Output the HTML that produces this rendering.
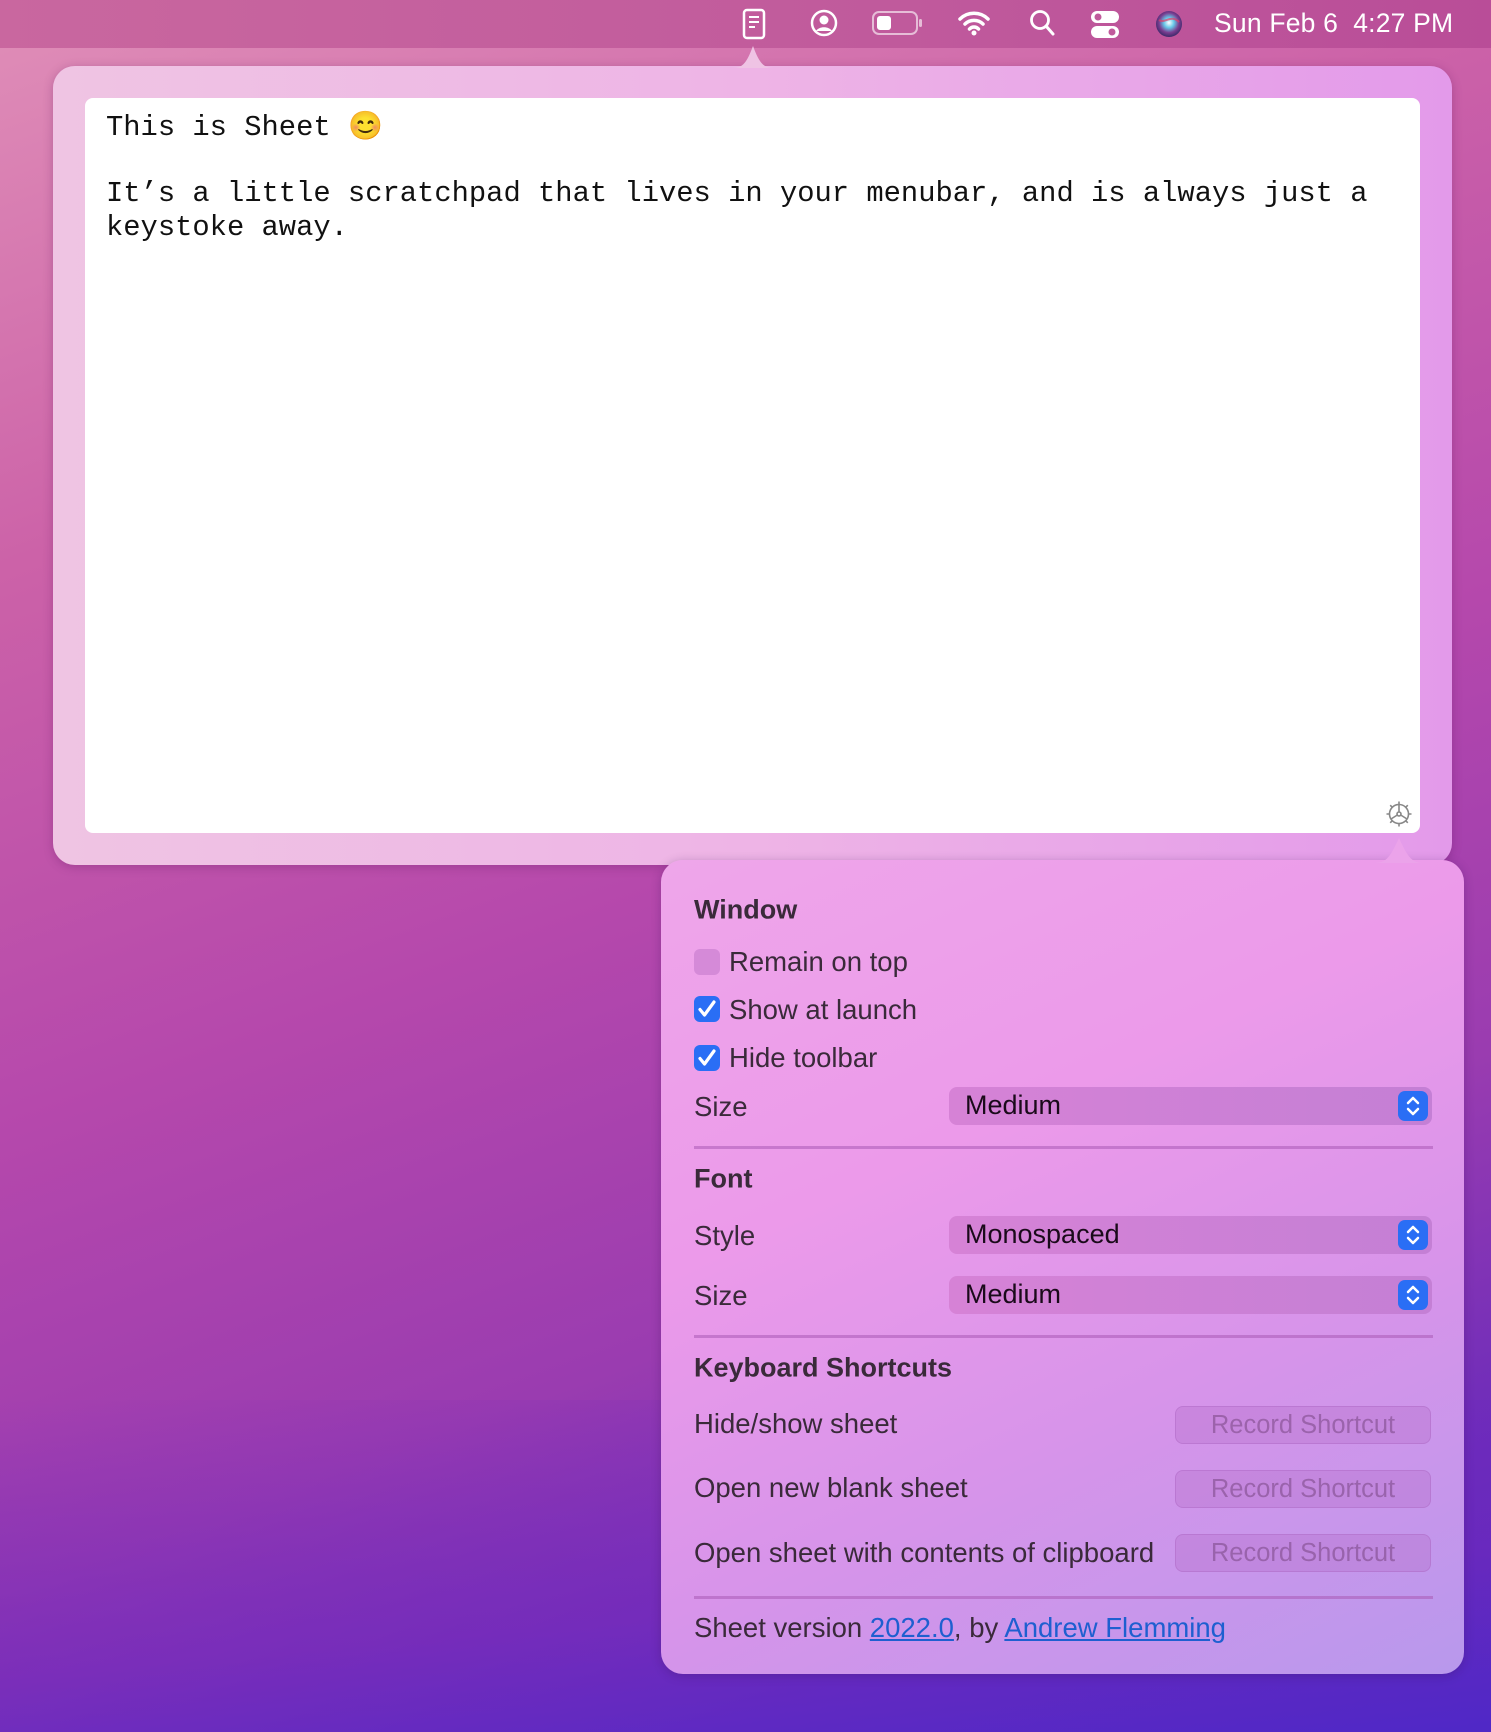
<!DOCTYPE html>
<html><head><meta charset="utf-8"><style>
*{margin:0;padding:0;box-sizing:border-box}
body{width:1491px;height:1732px;overflow:hidden;position:relative;font-family:"Liberation Sans",sans-serif;
background:linear-gradient(160deg,#e08fb8 0%,#cc62a8 25%,#b548ac 50%,#9a3cb0 70%,#6a2bbb 88%,#4d2ac0 100%)}
.bg1{position:absolute;left:0;top:1400px;width:1491px;height:332px;background:linear-gradient(175deg,rgba(130,40,180,0) 0%,rgba(110,40,190,.6) 60%,rgba(80,40,200,.8) 100%)}
.bar{position:absolute;left:0;top:0;width:1491px;height:48px;background:linear-gradient(90deg,#c9679f,#c05a9c 60%,#b94d98)}
.clock{position:absolute;left:1214px;top:8px;color:#fff;font-size:26.5px;letter-spacing:.2px}
.ic{position:absolute;top:8px}
.pop{position:absolute;left:53px;top:66px;width:1399px;height:799px;border-radius:22px;
background:linear-gradient(90deg,#efc4e3 0%,#eeb4e6 50%,#e39aea 100%);box-shadow:0 2px 10px rgba(90,20,90,.3)}
.arrow1{position:absolute;left:733px;top:44px;width:40px;height:24px}
.paper{position:absolute;left:85px;top:98px;width:1335px;height:735px;background:#fff;border-radius:8px}
.mono{position:absolute;left:106px;font-family:"Liberation Mono",monospace;font-size:28.8px;color:#111;white-space:pre;line-height:34px}
.set{position:absolute;left:661px;top:860px;width:803px;height:814px;border-radius:22px;
background:linear-gradient(155deg,#eea6ea 0%,#ec9aea 35%,#d794ea 65%,#b898ec 100%);box-shadow:0 2px 10px rgba(60,20,90,.3)}
.t{position:absolute;left:694px;font-size:27.5px;color:#3a2a3a;transform:translateY(-50%);white-space:nowrap}
.h{font-weight:bold;font-size:27px}
.cb{position:absolute;left:694px;width:26px;height:26px;border-radius:6px;transform:translateY(-50%)}
.on{background:#2a6ef5}
.off{background:#d58ad8}
.pu{position:absolute;left:949px;width:483px;height:38px;border-radius:8px;background:linear-gradient(90deg,#d682d6,#c47fd5);font-size:27px;color:#1a0a1a;padding:3px 16px}
.pu .st{position:absolute;right:4px;top:4px;width:30px;height:30px;border-radius:7px;background:#2a6ef5}
.dv{position:absolute;left:694px;width:739px;height:3px;background:rgba(170,90,180,.55)}
.btn{position:absolute;left:1175px;width:256px;height:38px;border-radius:8px;background:rgba(180,110,200,.35);border:1px solid rgba(170,100,190,.4);color:rgba(120,70,130,.55);font-size:25.5px;text-align:center;line-height:36px}
a{color:#1e5fd0;text-decoration:underline}
</style></head><body>
<div class="bg1"></div>
<div class="bar"></div>
<svg class="ic" style="left:742px" width="24" height="32" viewBox="0 0 24 32"><rect x="2" y="2" width="20" height="28" rx="3" fill="none" stroke="#fff" stroke-width="2.5"/><path d="M7 9h10M7 14h10M7 19h6" stroke="#fff" stroke-width="2"/></svg>
<svg class="ic" style="left:810px" width="28" height="30" viewBox="0 0 28 30"><circle cx="14" cy="15" r="12" fill="none" stroke="#fff" stroke-width="2.5"/><circle cx="14" cy="12" r="4.5" fill="#fff"/><path d="M6 23c3-5 13-5 16 0" fill="#fff"/></svg>
<svg class="ic" style="left:871px" width="52" height="30" viewBox="0 0 52 30"><rect x="2" y="4" width="44" height="22" rx="6" fill="none" stroke="rgba(255,255,255,.6)" stroke-width="2"/><rect x="6" y="8" width="14" height="14" rx="3" fill="#fff"/><rect x="48" y="11" width="3" height="8" rx="1.5" fill="rgba(255,255,255,.6)"/></svg>
<svg class="ic" style="left:957px" width="34" height="30" viewBox="0 0 34 30"><path d="M3 11a20 20 0 0 1 28 0M8 16a13 13 0 0 1 18 0M12.5 21a6 6 0 0 1 9 0" fill="none" stroke="#fff" stroke-width="3.5" stroke-linecap="round"/><circle cx="17" cy="25" r="2.5" fill="#fff"/></svg>
<svg class="ic" style="left:1028px" width="28" height="30" viewBox="0 0 28 30"><circle cx="12" cy="12" r="8.5" fill="none" stroke="#fff" stroke-width="2.8"/><path d="M18 18l7 8" stroke="#fff" stroke-width="3" stroke-linecap="round"/></svg>
<svg class="ic" style="left:1090px" width="30" height="32" viewBox="0 0 30 32"><rect x="1" y="3" width="28" height="12" rx="6" fill="#fff"/><circle cx="8" cy="9" r="3.5" fill="#c05a9c"/><rect x="1" y="18" width="28" height="12" rx="6" fill="#fff"/><circle cx="22" cy="24" r="3.5" fill="#c05a9c"/></svg>
<svg class="ic" style="left:1154px" width="30" height="32" viewBox="0 0 30 32"><defs><radialGradient id="s" cx="50%" cy="45%" r="55%"><stop offset="0" stop-color="#fff"/><stop offset=".35" stop-color="#66c8e8"/><stop offset=".7" stop-color="#7a3c8f"/><stop offset="1" stop-color="#3a2a6a"/></radialGradient></defs><circle cx="15" cy="16" r="13" fill="url(#s)"/><path d="M5 12c6 4 12-6 20 2" stroke="#e0406a" stroke-width="2" fill="none" opacity=".7"/></svg>
<div class="clock">Sun Feb 6&nbsp; 4:27 PM</div>

<div class="pop"></div>
<svg class="arrow1" viewBox="0 0 40 24"><path d="M0 24 C10 24 14 18 20 2 C26 18 30 24 40 24Z" fill="#efc3e4"/></svg>
<div class="paper"></div>
<div class="mono" style="top:107px">This is Sheet <span style="font-family:'Noto Sans CJK JP',sans-serif;font-size:28px">😊</span></div>
<div class="mono" style="top:177px">It’s a little scratchpad that lives in your menubar, and is always just a
keystoke away.</div>
<svg style="position:absolute;left:1385px;top:800px" width="28" height="28" viewBox="0 0 28 28"><g fill="none" stroke="#888" stroke-width="1.6"><circle cx="14" cy="14" r="9.5"/><circle cx="14" cy="14" r="2"/><path d="M14 4.5V12M6 19l6.3-4M22 19l-6.3-4"/><path d="M14 1.5v3M14 23.5v3M1.5 14h3M23.5 14h3M5.2 5.2l2.1 2.1M20.7 20.7l2.1 2.1M5.2 22.8l2.1-2.1M20.7 7.3l2.1-2.1"/></g></svg>

<div class="set"></div>
<svg style="position:absolute;left:1375px;top:835px" width="48" height="28" viewBox="0 0 48 28"><path d="M0 28 C12 28 16 20 24 3 C32 20 36 28 48 28Z" fill="#eba3ea"/></svg>

<div class="t h" style="top:910px">Window</div>
<div class="cb off" style="top:962px"></div><div class="t" style="left:729px;top:962px">Remain on top</div>
<div class="cb on" style="top:1009px"><svg width="26" height="26" viewBox="0 0 26 26"><path d="M6 13.5l4.5 5.5L20 6" fill="none" stroke="#fff" stroke-width="3.2" stroke-linecap="round" stroke-linejoin="round"/></svg></div><div class="t" style="left:729px;top:1010px">Show at launch</div>
<div class="cb on" style="top:1058px"><svg width="26" height="26" viewBox="0 0 26 26"><path d="M6 13.5l4.5 5.5L20 6" fill="none" stroke="#fff" stroke-width="3.2" stroke-linecap="round" stroke-linejoin="round"/></svg></div><div class="t" style="left:729px;top:1058px">Hide toolbar</div>
<div class="t" style="top:1107px">Size</div>
<div class="pu" style="top:1087px">Medium<div class="st"><svg width="30" height="30" viewBox="0 0 30 30"><path d="M10 12l5-5 5 5M10 18l5 5 5-5" fill="none" stroke="#fff" stroke-width="2.5" stroke-linecap="round" stroke-linejoin="round"/></svg></div></div>
<div class="dv" style="top:1146px"></div>
<div class="t h" style="top:1179px">Font</div>
<div class="t" style="top:1236px">Style</div>
<div class="pu" style="top:1216px">Monospaced<div class="st"><svg width="30" height="30" viewBox="0 0 30 30"><path d="M10 12l5-5 5 5M10 18l5 5 5-5" fill="none" stroke="#fff" stroke-width="2.5" stroke-linecap="round" stroke-linejoin="round"/></svg></div></div>
<div class="t" style="top:1296px">Size</div>
<div class="pu" style="top:1276px">Medium<div class="st"><svg width="30" height="30" viewBox="0 0 30 30"><path d="M10 12l5-5 5 5M10 18l5 5 5-5" fill="none" stroke="#fff" stroke-width="2.5" stroke-linecap="round" stroke-linejoin="round"/></svg></div></div>
<div class="dv" style="top:1335px"></div>
<div class="t h" style="top:1368px">Keyboard Shortcuts</div>
<div class="t" style="top:1424px">Hide/show sheet</div>
<div class="btn" style="top:1406px">Record Shortcut</div>
<div class="t" style="top:1488px">Open new blank sheet</div>
<div class="btn" style="top:1470px">Record Shortcut</div>
<div class="t" style="top:1553px">Open sheet with contents of clipboard</div>
<div class="btn" style="top:1534px">Record Shortcut</div>
<div class="dv" style="top:1596px"></div>
<div class="t" style="top:1628px">Sheet version <a>2022.0</a>, by <a>Andrew Flemming</a></div>
</body></html>
